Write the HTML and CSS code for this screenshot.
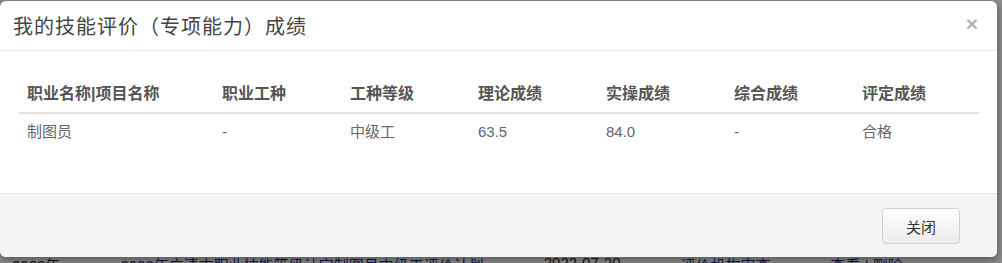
FILE: index.html
```html
<!DOCTYPE html>
<html lang="zh-CN">
<head>
    <meta charset="UTF-8">
    <title>我的技能评价</title>
    <link rel="stylesheet" href="styles.css">
</head>
<body>

    <!-- Página por trás do modal -->
    <div class="pagina">
        <div class="linha-baixo">
            <span>2022年</span>
            <span class="azul">2022年广清市职业技能等级认定制图员中级工评价计划</span>
            <span>2022-07-20</span>
            <span class="azul">评价机构审查</span>
            <span class="azul">查看 | 删除</span>
        </div>
    </div>
    <div class="fundo"></div>

    <!-- Modal de resultados -->
    <div class="modal">
        <div class="modal-header">
            <h4 class="modal-title">我的技能评价（专项能力）成绩</h4>
            <span class="fechar">&times;</span>
        </div>
        <div class="modal-body">
            <table class="tabela">
                <thead>
                    <tr>
                        <th class="col-nome">职业名称|项目名称</th>
                        <th>职业工种</th>
                        <th>工种等级</th>
                        <th>理论成绩</th>
                        <th>实操成绩</th>
                        <th>综合成绩</th>
                        <th class="col-final">评定成绩</th>
                    </tr>
                </thead>
                <tbody>
                    <tr>
                        <td>制图员</td>
                        <td>-</td>
                        <td>中级工</td>
                        <td>63.5</td>
                        <td>84.0</td>
                        <td>-</td>
                        <td>合格</td>
                    </tr>
                </tbody>
            </table>
        </div>
        <div class="modal-footer">
            <button class="btn">关闭</button>
        </div>
    </div>

</body>
</html>
```

FILE: styles.css
```css
body {
    margin: 0;
    padding: 0;
    width: 1002px;
    height: 263px;
    overflow: hidden;
    position: relative;
    font-family: "Liberation Sans", "Noto Sans CJK SC", sans-serif;
    background-color: #ffffff;
}

.pagina {
    height: 263px;
    display: flex;
    flex-direction: column;
    justify-content: flex-end;
    font-size: 15px;
    color: #222;
}

.linha-baixo {
    display: flex;
    gap: 60px;
    padding-left: 12px;
    margin-bottom: -12px;
}

.azul {
    color: #1a2a8a;
}

.fundo {
    position: absolute;
    top: 0;
    left: 0;
    right: 0;
    bottom: 0;
    background-color: rgba(0, 0, 0, 0.45);
}

.modal {
    position: absolute;
    top: 1px;
    left: 0;
    width: 997px;
    background-color: #ffffff;
    border-radius: 6px;
    overflow: hidden;
    box-shadow: 0 3px 9px rgba(0, 0, 0, 0.4);
}

.modal-header {
    height: 49px;
    padding: 0 13px;
    display: flex;
    align-items: center;
    justify-content: space-between;
    border-bottom: 1px solid #e5e5e5;
}

.modal-title {
    margin: 0;
    font-size: 20px;
    font-weight: normal;
    letter-spacing: 1px;
    color: #444;
}

.fechar {
    font-size: 21px;
    font-weight: bold;
    color: #b4b4b4;
    margin-right: 6px;
    margin-top: -4px;
}

.modal-body {
    padding: 25px 18px 43px 19px;
}

.tabela {
    width: 960px;
    border-collapse: collapse;
    table-layout: fixed;
}

.tabela th,
.tabela td {
    text-align: left;
    padding: 8px;
    line-height: 20px;
}

.tabela th {
    width: 112px;
    font-size: 16px;
    font-weight: bold;
    color: #555;
    border-bottom: 2px solid #e3e3e3;
}

.tabela th.col-nome {
    width: 179px;
}

.tabela th.col-final {
    width: auto;
}

.tabela td {
    font-size: 15px;
    color: #666;
}

.modal-footer {
    display: flex;
    justify-content: flex-end;
    padding: 14px 37px 13px 0;
    border-top: 1px solid #e5e5e5;
    background-color: #f4f4f4;
}

.btn {
    width: 78px;
    height: 36px;
    font-family: "Noto Sans CJK SC", sans-serif;
    font-size: 15px;
    color: #333;
    background: linear-gradient(#ffffff, #ebebeb);
    border: 1px solid #d0d0d0;
    border-radius: 4px;
    cursor: pointer;
}
```
